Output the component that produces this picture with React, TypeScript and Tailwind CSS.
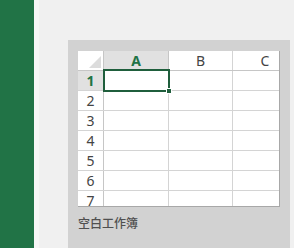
import React from 'react';

const rows = [1, 2, 3, 4, 5, 6, 7];

const Sheet: React.FC = () => (
  <div className="relative w-[202px] h-[156px] overflow-hidden bg-white border-r border-b border-[#a8a8a8]">
    {/* header row */}
    <div className="flex h-[20px] border-b border-[#c6c6c6]">
      <div className="relative w-[26px] shrink-0 border-r border-[#c6c6c6] bg-white">
        <div className="absolute right-[2px] bottom-[2px] w-0 h-0 border-l-[12px] border-l-transparent border-b-[12px] border-b-[#dcdcdc]" />
      </div>
      <div className="w-[65px] shrink-0 border-r border-[#c6c6c6] bg-[#e1e1e1] text-center text-[14px] leading-[19px] font-bold text-[#217346]">A</div>
      <div className="w-[64px] shrink-0 border-r border-[#d4d4d4] text-center text-[14px] leading-[19px] text-[#444]">B</div>
      <div className="w-[64px] shrink-0 text-center text-[14px] leading-[19px] text-[#444]">C</div>
    </div>
    {rows.map(r => (
      <div key={r} className="flex h-[20px] border-b border-[#d4d4d4]">
        <div
          className={`w-[26px] shrink-0 border-r border-[#c6c6c6] text-center text-[14px] leading-[19px] ${
            r === 1 ? 'bg-[#e1e1e1] font-bold text-[#217346]' : 'bg-white text-[#444]'
          }`}
        >
          {r}
        </div>
        <div className="w-[65px] shrink-0 border-r border-[#d4d4d4]" />
        <div className="w-[64px] shrink-0 border-r border-[#d4d4d4]" />
        <div className="w-[64px] shrink-0" />
      </div>
    ))}
    {/* active cell */}
    <div className="absolute left-[25px] top-[18px] w-[67px] h-[23px] border-2 border-[#1f5e3c]" />
    <div className="absolute left-[88px] top-[37px] w-[6px] h-[6px] bg-[#1f5e3c] border border-white" />
  </div>
);

export default function App() {
  return (
    <div
      className="flex w-[294px] h-[248px] overflow-hidden bg-[#f0f0f0]"
      style={{ fontFamily: '"Noto Sans", "Noto Sans CJK SC", sans-serif' }}
    >
      <div className="w-[34px] shrink-0 bg-[#217346]" />
      <div className="w-[5px] shrink-0 bg-[#f6f6f6]" />
      <div className="flex-1 pl-[29px] pt-[40px]">
        <div className="w-[222px] h-[220px] bg-[#d2d2d2] pl-[10px] pt-[11px]">
          <Sheet />
          <p className="mt-[9px] text-[12px] leading-[14px] font-medium text-[#505050] font-['Noto_Sans_CJK_SC',sans-serif]">
            空白工作簿
          </p>
        </div>
      </div>
    </div>
  );
}
